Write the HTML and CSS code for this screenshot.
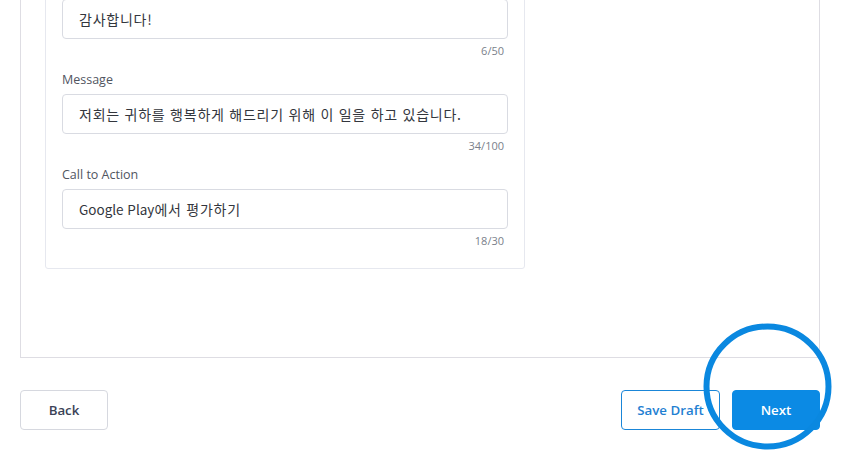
FILE: index.html
```html
<!DOCTYPE html>
<html lang="ko">
<head>
<meta charset="utf-8">
<title>Review prompt</title>
<link rel="stylesheet" href="styles.css">
</head>
<body>
<div class="page">
  <section class="panel">
    <div class="card">
      <div class="field">
        <label class="label">Title</label>
        <div class="input">감사합니다!</div>
        <div class="counter">6/50</div>
      </div>
      <div class="field">
        <label class="label">Message</label>
        <div class="input">저회는 귀하를 행복하게 해드리기 위해 이 일을 하고 있습니다.</div>
        <div class="counter">34/100</div>
      </div>
      <div class="field">
        <label class="label">Call to Action</label>
        <div class="input"><span class="latin">Google Play</span>에서 평가하기</div>
        <div class="counter">18/30</div>
      </div>
    </div>
  </section>
  <footer class="actions">
    <button class="btn btn-back">Back</button>
    <div class="actions-right">
      <button class="btn btn-draft">Save Draft</button>
      <button class="btn btn-next">Next</button>
      <svg class="highlight" width="130" height="128" viewBox="0 0 130 128" aria-hidden="true">
        <ellipse cx="64.5" cy="63.5" rx="61" ry="60" fill="none" stroke="#0a88e0" stroke-width="6"/>
      </svg>
    </div>
  </footer>
</div>
</body>
</html>
```

FILE: styles.css
```css
* { box-sizing: border-box; }

html {
  overflow: hidden;
  background: #ffffff;
}

body {
  margin: 0;
  padding: 0;
  min-height: 450px;
  background: #ffffff;
  font-family: "Open Sans", "Noto Sans CJK KR", sans-serif;
  color: #333740;
}

.page {
  width: 800px;
  margin: -65px 0 0 20px;
  padding-bottom: 40px;
}

.panel {
  border: 1px solid #dedde3;
  padding: 24px 0 88px 24px;
}

.card {
  width: 480px;
  border: 1px solid #e6e8ef;
  border-radius: 3px;
  padding: 16px 16px 20px 16px;
}

.field + .field {
  margin-top: 14px;
}

.label {
  display: block;
  font-size: 12.5px;
  line-height: 16px;
  color: #51555f;
  margin-bottom: 6px;
}

.input {
  height: 40px;
  border: 1px solid #d9dbe2;
  border-radius: 4px;
  padding: 0 16px;
  display: flex;
  align-items: center;
  font-family: "Noto Sans CJK KR", "Open Sans", sans-serif;
  font-size: 14px;
  letter-spacing: 0.75px;
  color: #33363d;
  white-space: pre;
}

.latin {
  font-size: 13.5px;
  letter-spacing: 0;
}

.counter {
  margin-top: 5px;
  padding-right: 4px;
  text-align: right;
  font-size: 11px;
  line-height: 14px;
  color: #7a7f8b;
}

.actions {
  margin-top: 32px;
  display: flex;
  justify-content: space-between;
  align-items: center;
}

.actions-right {
  position: relative;
  display: flex;
  gap: 12px;
}

.btn {
  height: 40px;
  border-radius: 4px;
  font-family: "Open Sans", sans-serif;
  font-size: 13.3px;
  font-weight: 600;
  padding: 0;
  cursor: pointer;
}

.btn-back {
  width: 88px;
  background: #ffffff;
  border: 1px solid #d6d8df;
  color: #3b4256;
}

.btn-draft {
  width: 99px;
  background: #ffffff;
  border: 1px solid #1a86d8;
  color: #1f80d2;
}

.btn-next {
  width: 88px;
  background: #0b8ae4;
  border: 1px solid #0b8ae4;
  color: #ffffff;
}

.highlight {
  position: absolute;
  right: -13px;
  top: -67px;
  pointer-events: none;
}
```
